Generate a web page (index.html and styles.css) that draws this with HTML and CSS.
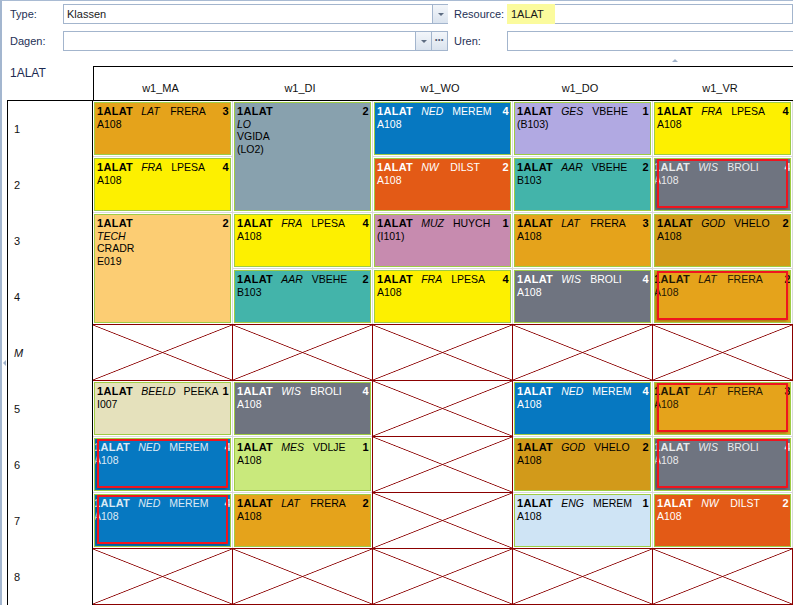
FILE: index.html
```html
<!DOCTYPE html>
<html>
<head>
    <title>Rooster 1ALAT</title>
    <link rel="stylesheet" href="styles.css">
</head>
<body>
<div class="window">
    <div class="filters">
        <label class="flabel">Type:</label>
        <div class="field">
            <span class="value">Klassen</span>
            <span class="btn drop"></span>
        </div>
        <label class="flabel right">Resource:</label>
        <div class="field"><span class="value hl">1ALAT</span></div>

        <label class="flabel">Dagen:</label>
        <div class="field">
            <span class="value"></span>
            <span class="btn drop"></span>
            <span class="btn dots">···</span>
        </div>
        <label class="flabel right">Uren:</label>
        <div class="field"></div>
    </div>

    <span class="grip-top"></span>
    <span class="grip-left"></span>

    <div class="sched">
        <div class="corner">1ALAT</div>
        <div class="head first">w1_MA</div>
        <div class="head">w1_DI</div>
        <div class="head">w1_WO</div>
        <div class="head">w1_DO</div>
        <div class="head">w1_VR</div>

        <!-- uur 1 -->
        <div class="rowlab">1</div>
        <div class="slot"><div class="les lat"><div class="l1"><b>1ALAT</b><i>LAT</i><span>FRERA</span><b class="n">3</b></div><div>A108</div></div></div>
        <div class="slot span2"><div class="les lo"><div class="l1"><b>1ALAT</b><b class="n">2</b></div><i>LO</i><div>VGIDA</div><div>(LO2)</div></div></div>
        <div class="slot"><div class="les ned"><div class="l1"><b>1ALAT</b><i>NED</i><span>MEREM</span><b class="n">4</b></div><div>A108</div></div></div>
        <div class="slot"><div class="les ges"><div class="l1"><b>1ALAT</b><i>GES</i><span>VBEHE</span><b class="n">1</b></div><div>(B103)</div></div></div>
        <div class="slot"><div class="les fra"><div class="l1"><b>1ALAT</b><i>FRA</i><span>LPESA</span><b class="n">4</b></div><div>A108</div></div></div>

        <!-- uur 2 -->
        <div class="rowlab">2</div>
        <div class="slot"><div class="les fra"><div class="l1"><b>1ALAT</b><i>FRA</i><span>LPESA</span><b class="n">4</b></div><div>A108</div></div></div>
        <div class="slot"><div class="les nw"><div class="l1"><b>1ALAT</b><i>NW</i><span>DILST</span><b class="n">2</b></div><div>A108</div></div></div>
        <div class="slot"><div class="les aar"><div class="l1"><b>1ALAT</b><i>AAR</i><span>VBEHE</span><b class="n">2</b></div><div>B103</div></div></div>
        <div class="slot"><div class="les wis ghost"><div class="l1"><b>1ALAT</b><i>WIS</i><span>BROLI</span><b class="n">4</b></div><div>A108</div></div></div>

        <!-- uur 3 -->
        <div class="rowlab">3</div>
        <div class="slot span2"><div class="les tech"><div class="l1"><b>1ALAT</b><b class="n">2</b></div><i>TECH</i><div>CRADR</div><div>E019</div></div></div>
        <div class="slot"><div class="les fra"><div class="l1"><b>1ALAT</b><i>FRA</i><span>LPESA</span><b class="n">4</b></div><div>A108</div></div></div>
        <div class="slot"><div class="les muz"><div class="l1"><b>1ALAT</b><i>MUZ</i><span>HUYCH</span><b class="n">1</b></div><div>(I101)</div></div></div>
        <div class="slot"><div class="les lat"><div class="l1"><b>1ALAT</b><i>LAT</i><span>FRERA</span><b class="n">3</b></div><div>A108</div></div></div>
        <div class="slot"><div class="les god"><div class="l1"><b>1ALAT</b><i>GOD</i><span>VHELO</span><b class="n">2</b></div><div>A108</div></div></div>

        <!-- uur 4 -->
        <div class="rowlab">4</div>
        <div class="slot"><div class="les aar"><div class="l1"><b>1ALAT</b><i>AAR</i><span>VBEHE</span><b class="n">2</b></div><div>B103</div></div></div>
        <div class="slot"><div class="les fra"><div class="l1"><b>1ALAT</b><i>FRA</i><span>LPESA</span><b class="n">4</b></div><div>A108</div></div></div>
        <div class="slot"><div class="les wis"><div class="l1"><b>1ALAT</b><i>WIS</i><span>BROLI</span><b class="n">4</b></div><div>A108</div></div></div>
        <div class="slot"><div class="les lat ghost"><div class="l1"><b>1ALAT</b><i>LAT</i><span>FRERA</span><b class="n">2</b></div><div>A108</div></div></div>

        <!-- middagpauze -->
        <div class="rowlab"><i>M</i></div>
        <div class="slot empty c1"></div>
        <div class="slot empty"></div>
        <div class="slot empty"></div>
        <div class="slot empty"></div>
        <div class="slot empty"></div>

        <!-- uur 5 -->
        <div class="rowlab">5</div>
        <div class="slot"><div class="les beeld"><div class="l1"><b>1ALAT</b><i>BEELD</i><span>PEEKA</span><b class="n">1</b></div><div>I007</div></div></div>
        <div class="slot"><div class="les wis"><div class="l1"><b>1ALAT</b><i>WIS</i><span>BROLI</span><b class="n">4</b></div><div>A108</div></div></div>
        <div class="slot empty"></div>
        <div class="slot"><div class="les ned"><div class="l1"><b>1ALAT</b><i>NED</i><span>MEREM</span><b class="n">4</b></div><div>A108</div></div></div>
        <div class="slot"><div class="les lat ghost"><div class="l1"><b>1ALAT</b><i>LAT</i><span>FRERA</span><b class="n">3</b></div><div>A108</div></div></div>

        <!-- uur 6 -->
        <div class="rowlab">6</div>
        <div class="slot"><div class="les ned ghost"><div class="l1"><b>1ALAT</b><i>NED</i><span>MEREM</span><b class="n">4</b></div><div>A108</div></div></div>
        <div class="slot"><div class="les mes"><div class="l1"><b>1ALAT</b><i>MES</i><span>VDLJE</span><b class="n">1</b></div><div>A108</div></div></div>
        <div class="slot empty"></div>
        <div class="slot"><div class="les god"><div class="l1"><b>1ALAT</b><i>GOD</i><span>VHELO</span><b class="n">2</b></div><div>A108</div></div></div>
        <div class="slot"><div class="les wis ghost"><div class="l1"><b>1ALAT</b><i>WIS</i><span>BROLI</span><b class="n">4</b></div><div>A108</div></div></div>

        <!-- uur 7 -->
        <div class="rowlab">7</div>
        <div class="slot"><div class="les ned ghost"><div class="l1"><b>1ALAT</b><i>NED</i><span>MEREM</span><b class="n">4</b></div><div>A108</div></div></div>
        <div class="slot"><div class="les lat"><div class="l1"><b>1ALAT</b><i>LAT</i><span>FRERA</span><b class="n">2</b></div><div>A108</div></div></div>
        <div class="slot empty"></div>
        <div class="slot"><div class="les eng"><div class="l1"><b>1ALAT</b><i>ENG</i><span>MEREM</span><b class="n">1</b></div><div>A108</div></div></div>
        <div class="slot"><div class="les nw"><div class="l1"><b>1ALAT</b><i>NW</i><span>DILST</span><b class="n">2</b></div><div>A108</div></div></div>

        <!-- uur 8 -->
        <div class="rowlab">8</div>
        <div class="slot empty c1"></div>
        <div class="slot empty"></div>
        <div class="slot empty"></div>
        <div class="slot empty"></div>
        <div class="slot empty"></div>
    </div>
</div>
</body>
</html>
```

FILE: styles.css
```css
* {
    box-sizing: border-box;
    margin: 0;
    padding: 0;
}

html, body {
    width: 793px;
    height: 605px;
    overflow: hidden;
}

body {
    font-family: "Liberation Sans", Arial, sans-serif;
    font-size: 11px;
    color: #000;
    background: #fff;
}

.window {
    position: relative;
    height: 605px;
    border-top: 1px solid #a9bbd3;
    border-left: 2px solid #a3b6cf;
}

/* filter bar */
.filters {
    display: grid;
    grid-template-columns: 53px 385px 59px 1fr;
    grid-template-rows: 20px 20px;
    row-gap: 7px;
    padding: 3px 0 0 8px;
}

.flabel {
    display: flex;
    align-items: center;
    color: #1e3156;
    font-size: 11px;
}

.flabel.right {
    padding-left: 6px;
}

.field {
    display: flex;
    border: 1px solid #a3b5cd;
    border-right: none;
    background: #fff;
}

.field .value {
    flex: 1;
    display: flex;
    align-items: center;
    padding-left: 3px;
    color: #1a1a1a;
}

.field .value.hl {
    flex: 0 0 48px;
    background: #fbfb9d;
    margin: -1px 0 -1px -1px;
    padding-left: 4px;
}

.btn {
    width: 16px;
    border-left: 1px solid #a3b5cd;
    background: linear-gradient(#f3f6fa, #dae3ee);
    display: flex;
    align-items: center;
    justify-content: center;
    color: #4d5d75;
}

.drop::before {
    content: "";
    border-left: 3px solid transparent;
    border-right: 3px solid transparent;
    border-top: 3px solid #5e6d82;
}

.dots {
    font-size: 12px;
    font-weight: bold;
    letter-spacing: -1px;
    padding: 0 1px 2px 0;
}

.filters .field:nth-of-type(2),
.filters .field:nth-of-type(3) {
    border-right: 1px solid #a3b5cd;
}

.grip-top {
    position: absolute;
    left: 670px;
    top: 58px;
    border-left: 3px solid transparent;
    border-right: 3px solid transparent;
    border-bottom: 3px solid #9fb1c9;
}

.grip-left {
    position: absolute;
    left: 1px;
    top: 359px;
    border-top: 3px solid transparent;
    border-bottom: 3px solid transparent;
    border-right: 3px solid #9fb1c9;
}

/* timetable */
.sched {
    display: grid;
    grid-template-columns: 86px repeat(5, 140px);
    grid-template-rows: 35px repeat(9, 56px);
    margin: 15px 0 0 5px;
}

.corner {
    border-bottom: 1px solid #000;
    padding: 1px 0 0 3px;
    font-size: 12px;
    line-height: 13px;
    color: #1c2a52;
}

.head {
    border-top: 1px solid #000;
    border-bottom: 1px solid #000;
    text-align: center;
    padding: 15px 6px 0 0;
    line-height: 13px;
    color: #111;
}

.head.first {
    border-left: 1px solid #000;
}

.rowlab {
    border-left: 1px solid #000;
    border-right: 1px solid #000;
    display: flex;
    align-items: center;
    padding-left: 6px;
    color: #111;
}

.slot {
    border-right: 1px solid #dadada;
    border-bottom: 1px solid #dadada;
    display: flex;
}

.slot.span2 {
    grid-row: span 2;
}

.slot.empty {
    border-color: #8b0000;
    box-shadow: 0 -1px 0 #8b0000, -1px 0 0 #8b0000;
    background:
        linear-gradient(to top right, transparent calc(50% - 0.8px), #8b0000 50%, transparent calc(50% + 0.8px)),
        linear-gradient(to bottom right, transparent calc(50% - 0.8px), #8b0000 50%, transparent calc(50% + 0.8px));
}

.slot.empty.c1 {
    box-shadow: 0 -1px 0 #8b0000;
}

/* lessons */
.les {
    position: relative;
    flex: 1;
    margin: 1px;
    border: 1px solid #9ecc44;
    padding: 2px 1px 0 2px;
    font-size: 10.5px;
    line-height: 12.5px;
    overflow: hidden;
    white-space: nowrap;
}

.les i {
    display: block;
}

.l1 {
    display: flex;
}

.l1 b {
    font-size: 11px;
    letter-spacing: 0.3px;
}

.l1 i {
    margin-left: 8px;
    min-width: 20px;
}

.l1 span {
    margin-left: 9px;
}

.l1 .n {
    margin-left: auto;
    padding-left: 4px;
}

.ghost > div {
    margin-left: -3px;
    margin-right: -2px;
    opacity: 0.85;
}

.ghost::after {
    content: "";
    position: absolute;
    top: 0;
    left: 2px;
    right: 2px;
    bottom: 2px;
    border: 2px solid #f0141e;
    box-shadow: -1px 1px 3px rgba(0, 0, 0, 0.35);
}

.lat { background: #e5a31b; }
.lo { background: #88a1ae; }
.ned { background: #0678c1; color: #fff; }
.ges { background: #b1a9e2; }
.fra { background: #fdf000; }
.nw { background: #e35a16; color: #fff; }
.aar { background: #43b4aa; }
.wis { background: #6f7480; color: #fff; }
.tech { background: #fccd73; }
.muz { background: #c78baf; }
.god { background: #d29a1a; }
.beeld { background: #e5e1bc; }
.mes { background: #c9e97c; }
.eng { background: #cfe4f5; }
```
